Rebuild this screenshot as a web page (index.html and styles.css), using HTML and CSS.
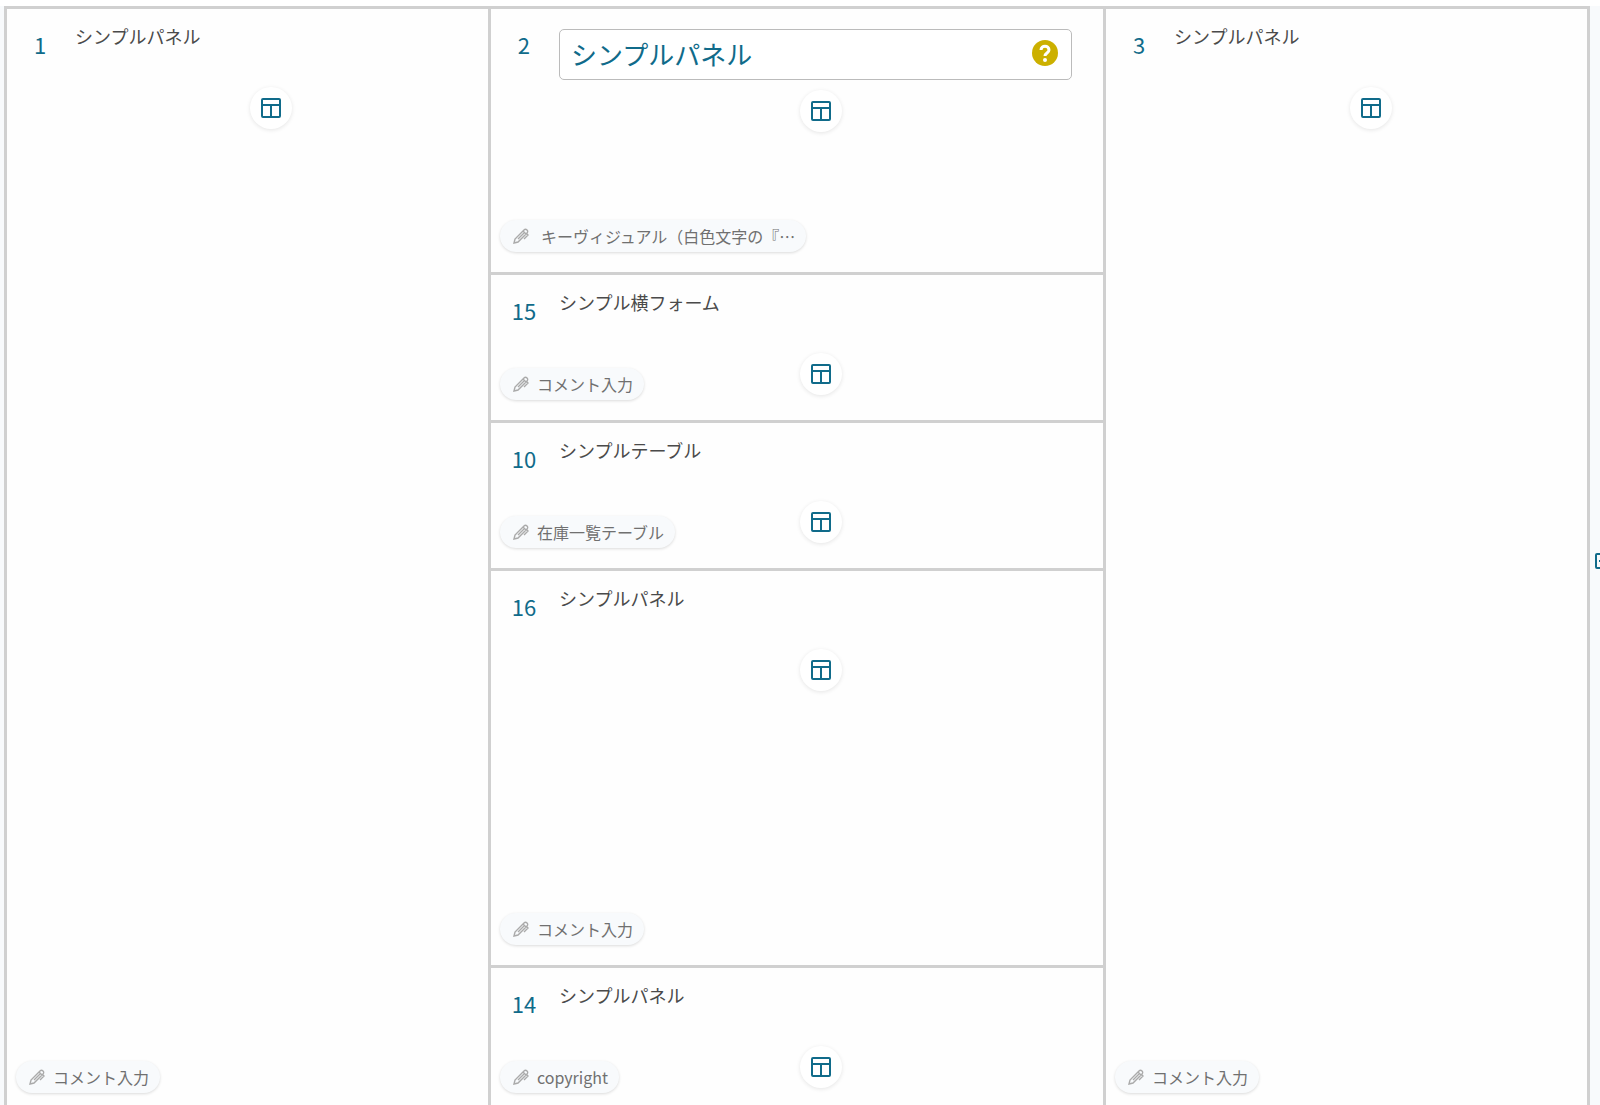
FILE: index.html
```
<!DOCTYPE html>
<html lang="ja">
<head>
    <meta charset="UTF-8">
    <title>レイアウト</title>
    <meta name="viewport" content="width=device-width, initial-scale=1">
    <link rel="stylesheet" href="styles.css">
</head>
<body>
<svg class="sprite" aria-hidden="true">
    <symbol id="icon-layout" viewBox="0 0 20 20">
        <rect x="1" y="1" width="18" height="18" rx="1"/>
        <path d="M1 7h18M10 7v12"/>
    </symbol>
    <symbol id="icon-pencil" viewBox="0 0 16 16">
        <path d="M1 15l1-4L11 2c2-2 5 1 3 3l-9 9zM10 3l3 3M5 11l6-6M14 6l1 1-4 4"/>
    </symbol>
</svg>

<div class="page">
    <main class="board">
        <section class="cell">
            <div class="head">
                <span class="num">1</span>
                <span class="title">シンプルパネル</span>
            </div>
            <button class="layout" type="button" aria-label="レイアウト"><svg><use href="#icon-layout"/></svg></button>
            <button class="comment" type="button"><svg><use href="#icon-pencil"/></svg>コメント入力</button>
        </section>

        <div class="column">
            <section class="cell cell-visual">
                <div class="head">
                    <label class="num" for="name">2</label>
                    <div class="field">
                        <input id="name" type="text" value="シンプルパネル">
                        <button class="help" type="button" aria-label="ヘルプ">
                            <svg viewBox="0 0 26 26">
                                <circle cx="13" cy="13" r="13"/>
                                <path d="M9 10c0-5 8-5 8 0 0 3-4 3-4 6"/>
                                <circle class="dot" cx="13" cy="20" r="2"/>
                            </svg>
                        </button>
                    </div>
                </div>
                <button class="layout" type="button" aria-label="レイアウト"><svg><use href="#icon-layout"/></svg></button>
                <button class="comment comment-long" type="button"><svg><use href="#icon-pencil"/></svg>キーヴィジュアル（白色文字の『…</button>
            </section>
            <section class="cell">
                <div class="head">
                    <span class="num">15</span>
                    <span class="title">シンプル横フォーム</span>
                </div>
                <button class="layout" type="button" aria-label="レイアウト"><svg><use href="#icon-layout"/></svg></button>
                <button class="comment" type="button"><svg><use href="#icon-pencil"/></svg>コメント入力</button>
            </section>
            <section class="cell">
                <div class="head">
                    <span class="num">10</span>
                    <span class="title">シンプルテーブル</span>
                </div>
                <button class="layout" type="button" aria-label="レイアウト"><svg><use href="#icon-layout"/></svg></button>
                <button class="comment" type="button"><svg><use href="#icon-pencil"/></svg>在庫一覧テーブル</button>
            </section>
            <section class="cell cell-main">
                <div class="head">
                    <span class="num">16</span>
                    <span class="title">シンプルパネル</span>
                </div>
                <button class="layout" type="button" aria-label="レイアウト"><svg><use href="#icon-layout"/></svg></button>
                <button class="comment" type="button"><svg><use href="#icon-pencil"/></svg>コメント入力</button>
            </section>
            <section class="cell">
                <div class="head">
                    <span class="num">14</span>
                    <span class="title">シンプルパネル</span>
                </div>
                <button class="layout" type="button" aria-label="レイアウト"><svg><use href="#icon-layout"/></svg></button>
                <button class="comment" type="button"><svg><use href="#icon-pencil"/></svg>copyright</button>
            </section>
        </div>

        <section class="cell">
            <div class="head">
                <span class="num">3</span>
                <span class="title">シンプルパネル</span>
            </div>
            <button class="layout" type="button" aria-label="レイアウト"><svg><use href="#icon-layout"/></svg></button>
            <button class="comment" type="button"><svg><use href="#icon-pencil"/></svg>コメント入力</button>
        </section>
    </main>

    <aside class="side">
        <button class="expand" type="button" aria-label="開く">
            <svg viewBox="0 0 16 16">
                <rect x="1" y="1" width="14" height="14" rx="1"/>
                <path d="M4 8h8M8 4v8"/>
            </svg>
        </button>
    </aside>
</div>
</body>
</html>
```
FILE: styles.css
```
* {
    box-sizing: border-box;
}

body {
    margin: 0;
    padding-top: 6px;
    overflow: hidden;
    font-family: "Noto Sans CJK JP", sans-serif;
    background-color: #ffffff;
    color: #4a4a4a;
}

button, input {
    font: inherit;
    color: inherit;
    border: 0;
    padding: 0;
    background: none;
}

button {
    cursor: pointer;
}

svg {
    display: block;
    fill: none;
    stroke: currentColor;
}

.sprite {
    display: none;
}

.page {
    display: flex;
    padding-left: 4px;
    background-color: #f8fafc;
}

/* the 3px gaps are the grid lines */
.board {
    flex: 1;
    display: grid;
    grid-template-columns: 11fr 14fr 11fr;
    gap: 3px;
    padding: 3px;
    background-color: #d0d0d0;
}

.column {
    display: flex;
    flex-direction: column;
    gap: 3px;
}

.cell {
    display: grid;
    grid-template-columns: 1fr;
    grid-template-rows: auto 1fr;
    row-gap: 10px;
    min-height: 145px;
    padding: 20px 0;
    background-color: #fefefe;
}

.cell-visual {
    min-height: 263px;
}

.cell-main {
    min-height: 394px;
}

.head {
    display: flex;
    min-height: 48px;
    padding-right: 31px;
}

.num {
    width: 68px;
    padding-right: 2px;
    font-size: 22px;
    line-height: 31px;
    text-align: center;
    color: #106b8a;
}

.title {
    font-size: 18px;
    line-height: 15px;
}

.field {
    flex: 1;
    display: flex;
    align-items: center;
    height: 51px;
    padding: 0 13px 3px 11px;
    border: 1px solid #bbbbbb;
    border-radius: 5px;
    background-color: #ffffff;
}

.field input {
    flex: 1;
    min-width: 0;
    font-size: 26px;
    color: #106b8a;
    outline: 0;
}

.help svg {
    width: 26px;
    height: 26px;
    fill: #ccb000;
    stroke: none;
}

.help path {
    fill: none;
    stroke: #ffffff;
    stroke-width: 3;
}

.help .dot {
    fill: #ffffff;
}

/* the two buttons share the second row of the cell */
.layout, .comment {
    grid-row: 2;
    grid-column: 1;
}

.layout {
    place-self: start center;
    display: grid;
    place-items: center;
    width: 42px;
    height: 42px;
    margin-left: 48px;
    border-radius: 50%;
    background-color: #ffffff;
    box-shadow: 0 1px 4px rgba(0, 0, 0, 0.1);
    color: #106b8a;
}

.layout svg {
    width: 20px;
    height: 20px;
    stroke-width: 2;
}

.comment {
    place-self: end start;
    display: flex;
    align-items: center;
    gap: 8px;
    height: 32px;
    margin-left: 9px;
    padding: 0 11px 0 13px;
    border-radius: 16px;
    background-color: #f8fafc;
    box-shadow: 0 1px 3px rgba(0, 0, 0, 0.14);
    font-size: 16px;
    color: #707070;
}

.comment-long {
    gap: 12px;
}

.comment svg {
    width: 16px;
    height: 16px;
    stroke-width: 1.4;
    color: #aaaaaa;
}

.side {
    display: flex;
    align-items: center;
    width: 10px;
    padding-left: 5px;
    overflow: hidden;
}

.expand {
    color: #106b8a;
}

.expand svg {
    width: 16px;
    height: 16px;
    stroke-width: 2;
}
```
